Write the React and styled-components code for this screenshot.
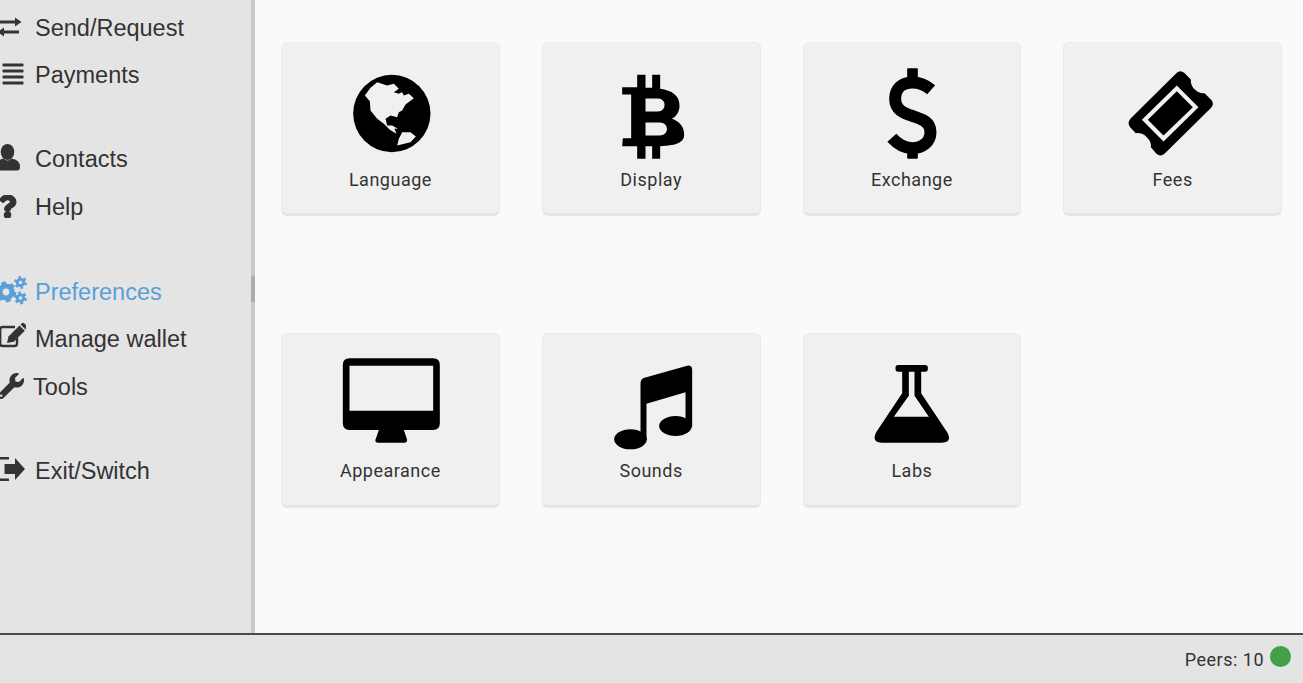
import React from 'react'
import styled, { createGlobalStyle } from 'styled-components'
import { FaAlignJustify, FaQuestion, FaWrench } from 'react-icons/fa'

const GlobalStyle = createGlobalStyle`
	html, body {
		margin: 0;
		height: 100%;
		overflow: hidden;
		background: #fafafa;
	}
	#root {
		height: 100%;
	}
`

const ExchangeGlyph = () => (
	<svg width="25" height="24" viewBox="0 0 25 24" fill="currentColor">
		<path d="M3 4.5 H18 V1.5 L24.5 6 L18 10.5 V7.5 H3 Z M22 14.5 H7 V11.5 L0.5 16 L7 20.5 V17.5 H22 Z" />
	</svg>
)

const UserGlyph = () => (
	<svg width="23" height="27" viewBox="0 0 23 27" fill="currentColor">
		<ellipse cx="10.5" cy="8" rx="6.8" ry="8" />
		<path d="M3 26.5 Q0 26.5 0 23 Q0 15.5 6.5 14.5 Q10.5 18.5 14.5 14.5 Q23 15.5 23 23 Q23 26.5 20 26.5 Z" />
	</svg>
)

const BoldQuestion = () => <FaQuestion size={23} stroke="currentColor" strokeWidth={30} />

const Gear = ({ cx, cy, r, hole }) => (
	<g fill="none" stroke="currentColor">
		<circle cx={cx} cy={cy} r={(r + hole) / 2} strokeWidth={r - hole} />
		<circle
			cx={cx}
			cy={cy}
			r={r + 0.6}
			strokeWidth={2.4}
			strokeDasharray={`${(r + 0.6) * 0.52} ${(r + 0.6) * 0.52}`}
		/>
	</g>
)

const CogsGlyph = () => (
	<svg width="28" height="30" viewBox="0 0 28 30">
		<Gear cx={7} cy={16} r={8.6} hole={3.4} />
		<Gear cx={21.5} cy={6.5} r={4.6} hole={1.8} />
		<Gear cx={21.5} cy={22} r={4.6} hole={1.8} />
	</svg>
)

const EditGlyph = () => (
	<svg width="27" height="26" viewBox="0 0 27 26" fill="currentColor">
		<path
			fill="none"
			stroke="currentColor"
			strokeWidth="2.4"
			d="M16 5 H3.5 Q1.2 5 1.2 7.5 V21.5 Q1.2 24 3.5 24 H15.5 Q18 24 18 21.5 V16"
		/>
		<path d="M8 21 L9.5 14.5 L20.5 3.5 L25.8 8.8 L14.8 19.8 Z" />
		<path d="M21.5 2.5 L23.2 1 Q24 0.4 24.8 1 L26.9 3.1 Q27.4 3.9 26.9 4.7 L26.8 7.8 Z" />
	</svg>
)

const WrenchGlyph = () => <FaWrench size={26} />

const ListGlyph = () => <FaAlignJustify size={24} />

const ExitGlyph = () => (
	<svg width="28" height="24" viewBox="0 0 28 24" fill="currentColor">
		<path
			fill="none"
			stroke="currentColor"
			strokeWidth="2.4"
			d="M11 1.2 H3 Q0.5 1.2 0.5 4 V20 Q0.5 22.8 3 22.8 H11"
		/>
		<path d="M6.5 7 H17 V1 L27 12 L17 23 V17 H6.5 Z" />
	</svg>
)

const navItems = [
	{ label: 'Send/Request', icon: ExchangeGlyph, shift: -3, lift: 1, height: 45.5 },
	{ label: 'Payments', icon: ListGlyph, shift: 1, lift: 2, height: 48 },
	{ label: 'Contacts', icon: UserGlyph, shift: -3, lift: 2, height: 48, gap: 36 },
	{ label: 'Help', icon: BoldQuestion, shift: -4, lift: 1, height: 48 },
	{ label: 'Preferences', icon: CogsGlyph, shift: -1, lift: 1, height: 47, gap: 37, active: true },
	{ label: 'Manage wallet', icon: EditGlyph, shift: -1, lift: 5, height: 48 },
	{ label: 'Tools', icon: WrenchGlyph, shift: -2, lift: 2, height: 48, indent: 33 },
	{ label: 'Exit/Switch', icon: ExitGlyph, shift: -2, lift: 2.5, height: 48, gap: 36 }
]

const GlobeIcon = () => (
	<IconSvg viewBox="211.5 94.5 300 300">
		<circle cx="364" cy="249" r="116" />
		<path
			fill="#f0f0f0"
			d="M283 195 L298 212 L300 240 L320 265 L340 280 L358 298 L378 310 L372 295 L382 295 L365 285 L350 285 L345 265 L360 255 L380 260 L385 245 L395 240 L405 222 L430 203 L415 190 L400 195 L395 185 L385 190 L370 185 L385 175 L370 160 L350 165 L320 155 L300 172 Z M380 345 L385 325 L395 305 L420 305 L436 318 L420 335 Z"
		/>
	</IconSvg>
)

const BitcoinIcon = () => (
	<IconSvg viewBox="997.5 94.5 300 300">
		<path
			fillRule="evenodd"
			d="M1103 133 H1128 V172 H1148 V133 H1172 V175 C1207 180 1230 195 1230 225 C1230 245 1220 258 1207 265 C1230 272 1244 290 1244 312 C1244 340 1212 345 1172 347 V385 H1148 V347 H1128 V385 H1103 V347 H1058 L1060 323 H1085 V192 H1058 V170 H1103 Z M1128 204 V243 H1165 C1192 243 1192 204 1165 204 Z M1128 276 V315 H1170 C1200 315 1200 276 1170 276 Z"
		/>
	</IconSvg>
)

const DollarIcon = () => (
	<IconSvg viewBox="217.5 94.5 300 300">
		<rect x="353" y="113" width="32" height="40" rx="3" />
		<rect x="353" y="345" width="32" height="40" rx="3" />
		<path
			fill="none"
			stroke="#000"
			strokeWidth="36"
			d="M425 178 C405 160 385 156 368 156 C335 156 317 178 317 205 C317 240 345 248 370 257 C400 267 423 275 423 305 C423 335 398 353 368 353 C345 353 325 342 307 322"
		/>
	</IconSvg>
)

const TicketIcon = () => (
	<IconSvg viewBox="1003.5 94.5 300 300">
		<path d="M1165 127 Q1175 118 1187 127 L1207 147 Q1205 165 1220 178 Q1232 190 1248 188 L1268 208 Q1278 220 1268 232 L1128 370 Q1116 380 1104 370 L1087 350 Q1090 335 1075 320 Q1060 305 1042 308 L1025 290 Q1015 275 1027 263 Z" />
		<path fill="#f0f0f0" d="M1165 165 L1230 230 L1125 333 L1060 268 Z" />
		<path d="M1165 182 L1213 230 L1125 315 L1078 268 Z" />
	</IconSvg>
)

const MonitorIcon = () => (
	<IconSvg viewBox="211.5 84 300 300">
		<path
			fillRule="evenodd"
			d="M237 100 H488 Q508 100 508 120 V295 Q508 315 488 315 H400 L408 338 Q414 353 400 353 H325 Q309 353 317 338 L325 315 H237 Q217 315 217 295 V120 Q217 100 237 100 Z M237 122 V257 H488 V122 Z"
		/>
	</IconSvg>
)

const MusicIcon = () => (
	<IconSvg viewBox="994.5 84 300 300">
		<ellipse cx="1080" cy="343" rx="49" ry="30" />
		<ellipse cx="1215" cy="303" rx="49" ry="30" />
		<path d="M1110 345 V175 Q1110 162 1122 158 L1250 122 Q1265 120 1265 135 V305 H1245 V202 L1128 236 V345 Z" />
	</IconSvg>
)

const FlaskIcon = () => (
	<IconSvg viewBox="217.5 84 300 300">
		<rect x="318" y="120" width="97" height="20" rx="8" />
		<path
			fillRule="evenodd"
			d="M338 138 V205 L260 322 Q245 353 278 353 H455 Q490 353 473 322 L395 205 V138 Z M358 138 H375 V212 L418 275 H313 L358 212 Z"
		/>
	</IconSvg>
)

const cards = [
	{ label: 'Language', icon: GlobeIcon },
	{ label: 'Display', icon: BitcoinIcon },
	{ label: 'Exchange', icon: DollarIcon },
	{ label: 'Fees', icon: TicketIcon },
	{ label: 'Appearance', icon: MonitorIcon },
	{ label: 'Sounds', icon: MusicIcon },
	{ label: 'Labs', icon: FlaskIcon }
]

const App = () => {
	return (
		<Page>
			<GlobalStyle />
			<Body>
				<Sidebar>
					{navItems.map(({ label, icon: Icon, shift, lift, height, gap, active, indent }) => (
						<NavItem key={label} $height={height} $gap={gap} $active={active}>
							<NavIcon $shift={shift} $lift={lift} $indent={indent}>
								<Icon />
							</NavIcon>
							{label}
						</NavItem>
					))}
					<ResizeHandle />
				</Sidebar>
				<Content>
					{cards.map(({ label, icon: Icon }) => (
						<Card key={label}>
							<Icon />
							<CardLabel>{label}</CardLabel>
						</Card>
					))}
				</Content>
			</Body>
			<Footer>
				<Peers>Peers: 10</Peers>
				<StatusDot />
			</Footer>
		</Page>
	)
}

export default App

const Page = styled.div`
	display: flex;
	flex-direction: column;
	height: 100%;
`

const Body = styled.div`
	display: flex;
	flex: 1;
	min-height: 0;
`

const Sidebar = styled.nav`
	position: relative;
	display: flex;
	flex-direction: column;
	box-sizing: border-box;
	width: 255px;
	padding-top: 6px;
	background: #e4e4e4;
	border-right: 4px solid #c8c8c8;
`

const NavItem = styled.div`
	display: flex;
	align-items: center;
	flex: none;
	height: ${props => props.$height}px;
	margin-top: ${props => props.$gap || 0}px;
	font-family: 'Liberation Sans', Arial, sans-serif;
	font-size: 23.5px;
	color: ${props => (props.$active ? '#5a9fd8' : '#333')};
`

const NavIcon = styled.span`
	display: flex;
	align-items: center;
	flex: none;
	width: ${props => props.$indent || 35}px;
	svg {
		flex: none;
		margin-left: ${props => props.$shift}px;
		margin-top: ${props => -2 * props.$lift}px;
	}
`

const ResizeHandle = styled.div`
	position: absolute;
	top: 276px;
	right: -4px;
	width: 4px;
	height: 26px;
	background: #adadad;
`

const Content = styled.main`
	flex: 1;
	display: grid;
	grid-template-columns: repeat(4, 218.75px);
	grid-auto-rows: 174.5px;
	column-gap: 42px;
	row-gap: 117px;
	align-content: start;
	padding: 41.5px 0 0 26px;
	background: #fafafa;
`

const Card = styled.div`
	display: flex;
	flex-direction: column;
	align-items: center;
	box-sizing: border-box;
	padding-top: 19px;
	background: #f0f0f0;
	border: 1px solid #eaeaea;
	border-bottom: 3px solid #e6e6e6;
	border-radius: 6px;
`

const IconSvg = styled.svg`
	display: block;
	flex: none;
	width: 100px;
	height: 100px;
	margin-left: 1px;
	fill: #000;
`

const CardLabel = styled.div`
	margin-top: 7px;
	font-family: Roboto, 'Liberation Sans', sans-serif;
	font-size: 18px;
	line-height: 22px;
	letter-spacing: 0.5px;
	color: #333;
`

const Footer = styled.footer`
	display: flex;
	align-items: center;
	justify-content: flex-end;
	flex: none;
	box-sizing: border-box;
	height: 50px;
	padding: 0 12px 0 0;
	background: #e4e4e4;
	border-top: 2px solid #4a4a4a;
`

const Peers = styled.span`
	font-family: Roboto, 'Liberation Sans', sans-serif;
	font-size: 18px;
	letter-spacing: 0.5px;
	color: #333;
`

const StatusDot = styled.span`
	width: 21px;
	height: 21px;
	margin: -6px 0 0 6px;
	border-radius: 50%;
	background: #43a047;
`
